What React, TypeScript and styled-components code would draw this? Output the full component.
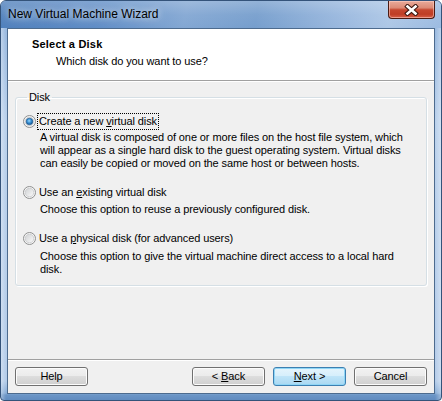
import React from "react";
import styled, { createGlobalStyle } from "styled-components";

const Global = createGlobalStyle`
  *, *::before, *::after { box-sizing: border-box; }
  html, body { margin: 0; padding: 0; background: #ffffff; }
  body {
    font-family: "Liberation Sans", Arial, sans-serif;
    font-size: 11px;
    color: #000;
  }
`;

const Window = styled.div`
  width: 442px;
  height: 401px;
  display: flex;
  flex-direction: column;
  border: 1px solid #34537a;
  border-radius: 6px 6px 4px 4px;
  overflow: hidden;
  padding: 0 6px 6px 6px;
  background:
    linear-gradient(90deg, rgba(255,255,255,0.35) 0px, rgba(255,255,255,0) 5px, rgba(255,255,255,0) 434px, rgba(255,255,255,0.35) 440px),
    linear-gradient(180deg, #8fb2dc 0px, #b9d0eb 120px, #b4cce9 380px, #8aaed8 392px, #6b95c6 394px, #5d88bd 401px);
`;

const TitleBar = styled.div`
  height: 27px;
  margin: 0 -6px;
  padding: 0 6px 0 7px;
  display: flex;
  align-items: flex-start;
  background:
    linear-gradient(180deg, rgba(255,255,255,0.22) 0px, rgba(255,255,255,0.05) 14px, rgba(255,255,255,0) 27px),
    linear-gradient(100deg, #4f80bc 0%, #5f8dc6 22%, #83a7d3 42%, #769ecd 58%, #9bb9df 78%, #adc7e6 88%, #9cbbe1 100%);
`;

const TitleText = styled.div`
  flex: 1;
  line-height: 27px;
  font-size: 12px;
  color: #000;
  text-shadow: 0 0 6px rgba(255,255,255,0.75), 0 0 12px rgba(255,255,255,0.5);
`;

const CloseButton = styled.div`
  width: 47px;
  height: 19px;
  margin-top: -1px;
  display: flex;
  align-items: center;
  justify-content: center;
  border: 1px solid #4a1a12;
  border-top-color: #6a2a20;
  border-radius: 0 0 4px 4px;
  background: linear-gradient(180deg, #e9ab9b 0%, #dc8a76 40%, #c5472f 52%, #bf3d25 78%, #d7614a 100%);
  box-shadow: inset 0 0 0 1px rgba(255, 210, 200, 0.55);
`;

const Client = styled.div`
  flex: 1;
  display: flex;
  flex-direction: column;
  border: 1px solid #4d6b8e;
  background: #f0f0f0;
  letter-spacing: -0.1px;
`;

const Header = styled.div`
  height: 52px;
  background: #ffffff;
  border-bottom: 1px solid #a0a0a0;
  padding: 9px 0 0 24px;
`;

const HeaderTitle = styled.div`
  font-weight: bold;
  line-height: 13px;
  letter-spacing: 0.2px;
`;

const HeaderSub = styled.div`
  margin-top: 4px;
  padding-left: 24px;
  line-height: 13px;
`;

const Body = styled.div`
  flex: 1;
  border-top: 1px solid #ffffff;
  padding: 9px 7px 0 7px;
`;

const GroupBox = styled.fieldset`
  margin: 0;
  padding: 0 7px 9px 7px;
  border: 1px solid #d5dfe5;
  border-radius: 3px;
  box-shadow: 1px 1px 0 #ffffff, inset 1px 1px 0 #ffffff;
`;

const Legend = styled.legend`
  margin-left: 4px;
  padding: 0 2px;
  line-height: 13px;
`;

const OptionRow = styled.div<{ $gap: number }>`
  display: flex;
  align-items: center;
  height: 17px;
  margin-top: ${(p) => p.$gap}px;
`;

const OptionLabel = styled.span<{ $focused?: boolean }>`
  margin-left: 1px;
  padding: 0 1px;
  line-height: 15px;
  border: 1px dotted ${(p) => (p.$focused ? "#000" : "transparent")};
`;

const Description = styled.div<{ $gap: number }>`
  margin-top: ${(p) => p.$gap}px;
  padding-left: 17px;
  line-height: 13px;
`;

const Footer = styled.div`
  display: flex;
  gap: 8px;
  padding: 7px 7px;
  border-top: 1px solid #a0a0a0;
  box-shadow: inset 0 1px 0 #ffffff;
`;

const Spacer = styled.div`
  flex: 1;
`;

const Button = styled.div<{ $default?: boolean }>`
  width: 73px;
  height: 19px;
  display: flex;
  align-items: center;
  justify-content: center;
  white-space: pre;
  border-radius: 3px;
  border: 1px solid ${(p) => (p.$default ? "#3c7fb1" : "#707070")};
  background: ${(p) =>
    p.$default
      ? "linear-gradient(180deg, #e5f4fc 0%, #d5eefb 50%, #bfe4f8 50%, #a9d8f2 100%)"
      : "linear-gradient(180deg, #f2f2f2 0%, #ebebeb 50%, #dddddd 50%, #cfcfcf 100%)"};
  box-shadow: inset 0 0 0 1px ${(p) => (p.$default ? "#8fd6f6" : "#fcfcfc")};
  line-height: 13px;
`;

const Radio: React.FC<{ checked?: boolean }> = ({ checked }) => (
  <svg width="13" height="13" viewBox="0 0 13 13">
    <defs>
      <linearGradient id="rbFill" x1="0" y1="0" x2="1" y2="1">
        <stop offset="0" stopColor="#cfd1d3" />
        <stop offset="1" stopColor="#fbfbfb" />
      </linearGradient>
      <radialGradient id="rbDot" cx="0.45" cy="0.4" r="0.65">
        <stop offset="0" stopColor="#9bd7fb" />
        <stop offset="0.45" stopColor="#3b93d6" />
        <stop offset="1" stopColor="#0d4680" />
      </radialGradient>
    </defs>
    <circle cx="6.5" cy="6.5" r="6" fill="#f6f6f6" stroke="#8e8f8f" strokeWidth="1" />
    <circle cx="6.5" cy="6.5" r="4.3" fill="url(#rbFill)" stroke="#c6c8ca" strokeWidth="0.8" />
    {checked && <circle cx="6.5" cy="6.5" r="3.3" fill="url(#rbDot)" stroke="#1c5a94" strokeWidth="0.6" />}
  </svg>
);

const CloseGlyph: React.FC = () => (
  <svg width="15" height="12" viewBox="0 0 15 12">
    <path d="M3.5 2.5 L11.5 9.5 M11.5 2.5 L3.5 9.5" stroke="#3b1710" strokeWidth="4.6" strokeLinecap="square" fill="none" />
    <path d="M3.5 2.5 L11.5 9.5 M11.5 2.5 L3.5 9.5" stroke="#ffffff" strokeWidth="2.6" strokeLinecap="square" fill="none" />
  </svg>
);

export default function App() {
  return (
    <>
      <Global />
      <Window>
        <TitleBar>
          <TitleText>New Virtual Machine Wizard</TitleText>
          <CloseButton>
            <CloseGlyph />
          </CloseButton>
        </TitleBar>
        <Client>
          <Header>
            <HeaderTitle>Select a Disk</HeaderTitle>
            <HeaderSub>Which disk do you want to use?</HeaderSub>
          </Header>
          <Body>
            <GroupBox>
              <Legend>Disk</Legend>
              <OptionRow $gap={9}>
                <Radio checked />
                <OptionLabel $focused>
                  {"Create a new "}
                  <u>v</u>
                  {"irtual disk"}
                </OptionLabel>
              </OptionRow>
              <Description $gap={1}>
                A virtual disk is composed of one or more files on the host file system, which
                <br />
                will appear as a single hard disk to the guest operating system. Virtual disks
                <br />
                can easily be copied or moved on the same host or between hosts.
              </Description>
              <OptionRow $gap={14}>
                <Radio />
                <OptionLabel>
                  {"Use an "}
                  <u>e</u>
                  {"xisting virtual disk"}
                </OptionLabel>
              </OptionRow>
              <Description $gap={2}>Choose this option to reuse a previously configured disk.</Description>
              <OptionRow $gap={14}>
                <Radio />
                <OptionLabel>
                  {"Use a "}
                  <u>p</u>
                  {"hysical disk (for advanced users)"}
                </OptionLabel>
              </OptionRow>
              <Description $gap={3}>
                Choose this option to give the virtual machine direct access to a local hard
                <br />
                disk.
              </Description>
            </GroupBox>
          </Body>
          <Footer>
            <Button>Help</Button>
            <Spacer />
            <Button>
              {"< "}
              <u>B</u>
              {"ack"}
            </Button>
            <Button $default>
              <u>N</u>
              {"ext >"}
            </Button>
            <Button>Cancel</Button>
          </Footer>
        </Client>
      </Window>
    </>
  );
}
